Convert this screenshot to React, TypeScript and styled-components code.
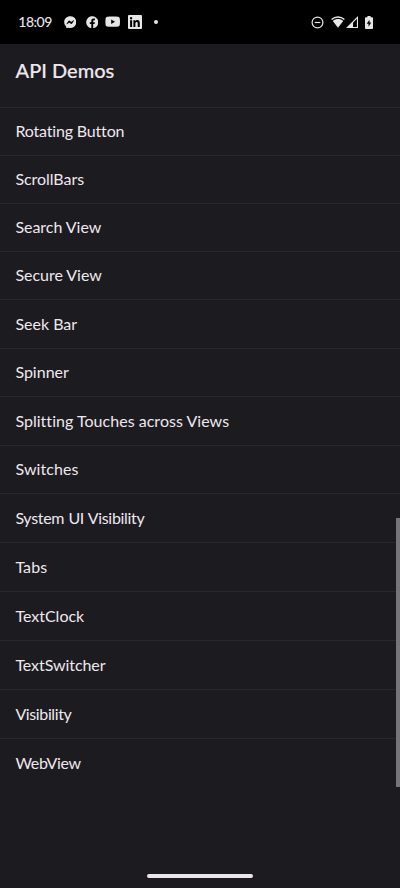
import React from "react";
import styled, { createGlobalStyle } from "styled-components";
import { FaFacebook, FaFacebookMessenger, FaYoutube } from "react-icons/fa";

const GlobalStyle = createGlobalStyle`
  * { box-sizing: border-box; }
  html, body { margin: 0; padding: 0; background: #1c1b20; }
`;

const Screen = styled.div`
  position: relative;
  display: flex;
  flex-direction: column;
  width: 400px;
  height: 888px;
  overflow: hidden;
  background: #1c1b20;
  color: #eee8ee;
  font-family: Lato, "Open Sans", sans-serif;
  font-variant-ligatures: none;
`;

const StatusBar = styled.header`
  display: flex;
  flex: none;
  align-items: center;
  justify-content: space-between;
  height: 44px;
  padding: 0 27px 0 18.3px;
  background: #000;
  color: #e6e6e6;
`;

const StatusGroup = styled.div`
  display: flex;
  align-items: center;
  height: 44px;

  svg {
    display: block;
    flex: none;
  }
`;

const Clock = styled.time`
  width: 45.7px;
  font-size: 14px;
  font-weight: 500;
  line-height: 44px;
  letter-spacing: -0.5px;
`;

const IconSlot = styled.span<{ $gap: number }>`
  display: flex;
  margin-left: ${(p) => p.$gap}px;
`;

const MoreDot = styled.span`
  width: 4px;
  height: 4px;
  margin-left: 12.3px;
  border-radius: 50%;
  background: #e6e6e6;
`;

const TitleBar = styled.div`
  flex: none;
  height: 63px;
  padding: 0 15.6px;
`;

const Title = styled.h1`
  margin: 0;
  font-size: 20px;
  font-weight: 500;
  line-height: 53px;
  -webkit-text-stroke: 0.15px currentColor;
`;

const List = styled.ul`
  flex: 1;
  margin: 0;
  padding: 0;
  list-style: none;
`;

const Row = styled.li<{
  $height: number;
  $line?: number;
  $tracking?: number;
  $wordGap?: number;
}>`
  height: ${(p) => p.$height}px;
  padding-left: 15.4px;
  border-top: 1px solid #28272c;
  font-size: 16px;
  line-height: ${(p) => p.$line ?? 48}px;
  letter-spacing: ${(p) => (p.$tracking ? `${p.$tracking}px` : "normal")};
  word-spacing: ${(p) => p.$wordGap ?? 0}px;
  white-space: nowrap;
`;

const ScrollThumb = styled.div`
  position: absolute;
  top: 518px;
  right: 0;
  width: 4px;
  height: 269px;
  background: #757477;
`;

const NavigationBar = styled.footer`
  display: flex;
  flex: none;
  justify-content: center;
  height: 14px;
`;

const HomeHandle = styled.div`
  width: 106px;
  height: 4px;
  border-radius: 2px;
  background: #ece6ec;
`;

interface Item {
  label: string;
  height: number;
  line?: number;
  tracking?: number;
  wordGap?: number;
}

const items: Item[] = [
  { label: "Rotating Button", height: 48, line: 46, tracking: -0.17 },
  { label: "ScrollBars", height: 48, line: 46, tracking: -0.05 },
  { label: "Search View", height: 48, line: 46, tracking: -0.03 },
  { label: "Secure View", height: 48, line: 46, tracking: -0.03 },
  { label: "Seek Bar", height: 49 },
  { label: "Spinner", height: 48, line: 46 },
  { label: "Splitting Touches across Views", height: 49, tracking: 0.03 },
  { label: "Switches", height: 48, line: 46, tracking: 0.08 },
  { label: "System UI Visibility", height: 49, tracking: -0.3, wordGap: 0.4 },
  { label: "Tabs", height: 49, tracking: 0.1 },
  { label: "TextClock", height: 49 },
  { label: "TextSwitcher", height: 49, tracking: -0.07 },
  { label: "Visibility", height: 49, line: 47, tracking: -0.38 },
  { label: "WebView", height: 49, line: 47, tracking: -0.3 },
];

const LinkedInIcon = () => (
  <svg width="14" height="14" viewBox="0 0 14 14">
    <path
      fill="currentColor"
      fillRule="evenodd"
      d="M1 0h12a1 1 0 0 1 1 1v12a1 1 0 0 1-1 1H1a1 1 0 0 1-1-1V1a1 1 0 0 1 1-1ZM2.1 5.3v6.6h2V5.3h-2ZM3.1 2a1.2 1.2 0 1 0 0 2.4 1.2 1.2 0 0 0 0-2.4ZM5.4 5.3v6.6h2V8.6c0-1 .4-1.6 1.2-1.6s1.1.6 1.1 1.6v3.3h2.1V8.1c0-2-1-3-2.4-3-.9 0-1.6.4-2 1.1v-.9h-2Z"
    />
  </svg>
);

const DoNotDisturbIcon = () => (
  <svg width="13" height="13" viewBox="0 0 13 13" fill="none" stroke="currentColor">
    <circle cx="6.5" cy="6.5" r="5.4" strokeWidth="1.2" />
    <path d="M3.7 6.5h5.6" strokeWidth="1.2" />
  </svg>
);

const WifiIcon = () => (
  <svg width="14" height="12" viewBox="0 0 14 12">
    <path d="M.6 3.6C4.3.1 9.7.1 13.4 3.6" fill="none" stroke="currentColor" strokeWidth="1.4" />
    <path d="M1.8 4.9c3-2.4 7.4-2.4 10.4 0L7 11.8Z" fill="currentColor" />
  </svg>
);

const SignalIcon = () => (
  <svg width="12" height="12" viewBox="0 0 12 12">
    <path
      fill="currentColor"
      fillRule="evenodd"
      d="M0 12 12 0v12H0ZM7 6.8v4.1h3.9V2.8L7 6.8Z"
    />
  </svg>
);

const BatteryIcon = () => (
  <svg width="8" height="13" viewBox="0 0 8 13">
    <path
      fill="currentColor"
      fillRule="evenodd"
      d="M2.4 0h3.2v1.3h1.6c.5 0 .8.3.8.8v10.1c0 .5-.3.8-.8.8H.8c-.5 0-.8-.3-.8-.8V2.1c0-.5.3-.8.8-.8h1.6V0ZM4.5 3.8 1.7 7.7h1.8v3l2.8-4.1H4.5V3.8Z"
    />
  </svg>
);

export default function App() {
  return (
    <>
      <GlobalStyle />
      <Screen>
        <StatusBar>
          <StatusGroup>
            <Clock>18:09</Clock>
            <IconSlot $gap={0}><FaFacebookMessenger size={12.5} /></IconSlot>
            <IconSlot $gap={9.2}><FaFacebook size={12.5} /></IconSlot>
            <IconSlot $gap={7.3}><FaYoutube size={15.4} /></IconSlot>
            <IconSlot $gap={7.1}><LinkedInIcon /></IconSlot>
            <MoreDot />
          </StatusGroup>
          <StatusGroup>
            <IconSlot $gap={0}><DoNotDisturbIcon /></IconSlot>
            <IconSlot $gap={7}><WifiIcon /></IconSlot>
            <IconSlot $gap={1.3}><SignalIcon /></IconSlot>
            <IconSlot $gap={7}><BatteryIcon /></IconSlot>
          </StatusGroup>
        </StatusBar>
        <TitleBar>
          <Title>API Demos</Title>
        </TitleBar>
        <List>
          {items.map((item) => (
            <Row
              key={item.label}
              $height={item.height}
              $line={item.line}
              $tracking={item.tracking}
              $wordGap={item.wordGap}
            >
              {item.label}
            </Row>
          ))}
        </List>
        <ScrollThumb />
        <NavigationBar>
          <HomeHandle />
        </NavigationBar>
      </Screen>
    </>
  );
}
